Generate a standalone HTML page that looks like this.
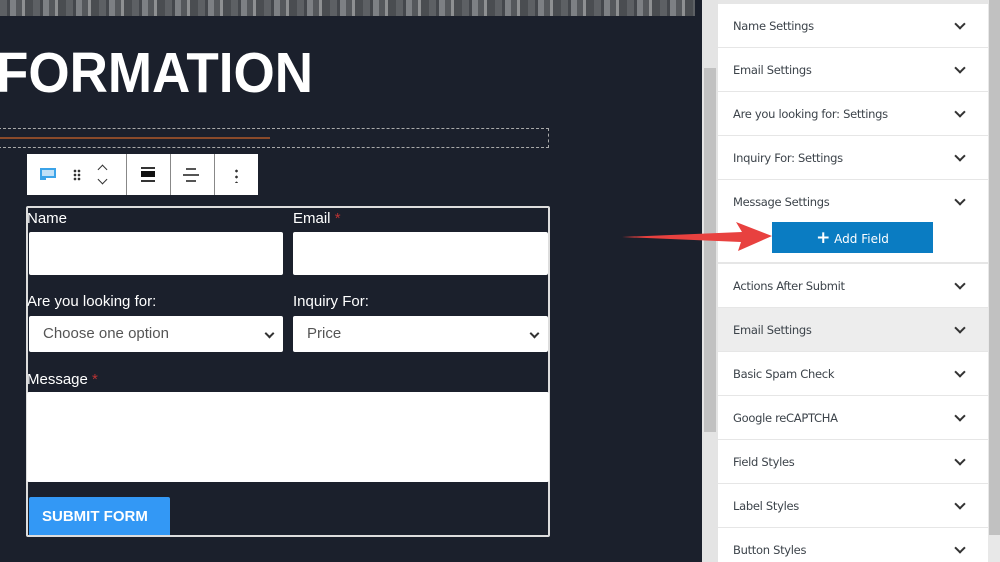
<!DOCTYPE html>
<html><head><style>
*{box-sizing:border-box;margin:0;padding:0}
html,body{width:1000px;height:562px;overflow:hidden}
body{background:#1b202c;position:relative;font-family:"Liberation Sans",sans-serif}
.abs{position:absolute}
.photo{left:0;top:0;width:695px;height:16px;background:repeating-linear-gradient(90deg,#5d6064 0 7px,#44474c 7px 10px,#7d8084 10px 16px,#55585c 16px 22px,#8e9092 22px 25px,#4a4d51 25px 33px)}
h1{position:absolute;left:-4px;top:40px;color:#fff;font-size:57px;font-weight:bold;transform:scaleX(0.93);transform-origin:0 0}
.lbl{position:absolute;color:#fff;font-size:15px}
.lbl b{color:#b33;font-weight:normal}
.inp{position:absolute;background:#fff;border-radius:2px}
.sel{position:absolute;background:#fff;color:#555;font-size:15px;padding:9px 0 0 14px;border-radius:2px}
.sel:after{content:"";position:absolute;right:10px;top:14px;width:5px;height:5px;border-right:2px solid #333;border-bottom:2px solid #333;transform:rotate(45deg)}
.row{position:absolute;left:718px;width:270px;height:43px;background:#fff;color:#3c434a;font-size:11.5px;padding-left:15px;line-height:45px;font-family:"DejaVu Sans","Liberation Sans",sans-serif;letter-spacing:-0.3px;overflow:hidden}
.row:after{content:"";position:absolute;right:24px;top:16px;width:6px;height:6px;border-right:2px solid #333;border-bottom:2px solid #333;transform:rotate(45deg)}
</style></head><body>
<div class="abs photo"></div>
<div class="abs" style="left:702px;top:0;width:16px;height:562px;background:#e4e4e4"></div>
<div class="abs" style="left:704px;top:68px;width:12px;height:364px;background:#c1c1c1"></div>
<div class="abs" style="left:718px;top:0;width:270px;height:562px;background:#e6e6e6"></div>
<div class="abs" style="left:988px;top:0;width:12px;height:562px;background:#e8e8e8"></div>
<div class="abs" style="left:989px;top:0;width:11px;height:535px;background:#c1c1c1"></div>
<h1>FORMATION</h1>
<div class="abs" style="left:-2px;top:128px;width:551px;height:20px;border:1px dashed #aaa"></div>
<div class="abs" style="left:0;top:137px;width:270px;height:2px;background:#8a4a2a"></div>
<div class="abs" style="left:27px;top:154px;width:231px;height:41px;background:#fff"></div>
<div class="abs" style="left:126px;top:154px;width:1px;height:41px;background:#888"></div>
<div class="abs" style="left:170px;top:154px;width:1px;height:41px;background:#888"></div>
<div class="abs" style="left:214px;top:154px;width:1px;height:41px;background:#888"></div>
<div class="abs" style="left:40px;top:168px;width:16px;height:10px;border:2px solid #3ba3e8;background:#bfe0f7"></div>
<div class="abs" style="left:40px;top:177px;width:6px;height:3px;background:#3ba3e8"></div>
<div class="abs" style="left:73px;top:169px;width:8px;height:12px;background:radial-gradient(circle,#333 1.2px,transparent 1.5px) 0 0/4px 4px"></div>
<div class="abs" style="left:99px;top:166px;width:7px;height:7px;border-left:1.5px solid #333;border-top:1.5px solid #333;transform:rotate(45deg)"></div>
<div class="abs" style="left:99px;top:176px;width:7px;height:7px;border-right:1.5px solid #333;border-bottom:1.5px solid #333;transform:rotate(45deg)"></div>
<div class="abs" style="left:141px;top:167px;width:14px;height:2px;background:#333"></div>
<div class="abs" style="left:141px;top:171px;width:14px;height:6px;background:#111"></div>
<div class="abs" style="left:141px;top:180px;width:14px;height:2px;background:#333"></div>
<div class="abs" style="left:186px;top:168px;width:10px;height:2px;background:#555"></div>
<div class="abs" style="left:183px;top:174px;width:16px;height:2px;background:#555"></div>
<div class="abs" style="left:186px;top:180px;width:10px;height:2px;background:#555"></div>
<div class="abs" style="left:235px;top:168px;width:3px;height:15px;background:radial-gradient(circle,#333 1.2px,transparent 1.5px) 0 0/3px 6px"></div>
<div class="abs" style="left:26px;top:206px;width:524px;height:331px;border:2px solid #ddd;border-radius:2px"></div>
<div class="lbl" style="left:27px;top:210px">Name</div>
<div class="lbl" style="left:293px;top:210px">Email <b>*</b></div>
<div class="inp" style="left:29px;top:232px;width:254px;height:43px"></div>
<div class="inp" style="left:293px;top:232px;width:255px;height:43px"></div>
<div class="lbl" style="left:27px;top:293px">Are you looking for:</div>
<div class="lbl" style="left:293px;top:293px">Inquiry For:</div>
<div class="sel" style="left:29px;top:316px;width:254px;height:36px">Choose one option</div>
<div class="sel" style="left:293px;top:316px;width:255px;height:36px">Price</div>
<div class="lbl" style="left:27px;top:371px">Message <b>*</b></div>
<div class="inp" style="left:27px;top:392px;width:522px;height:90px"></div>
<div class="abs" style="left:29px;top:497px;width:141px;height:38px;background:#3398f5;color:#fff;font-weight:bold;font-size:15px;padding:11px 0 0 13px;border-radius:2px 2px 0 0">SUBMIT FORM</div>
<div class="row" style="top:4px">Name Settings</div>
<div class="row" style="top:48px">Email Settings</div>
<div class="row" style="top:92px">Are you looking for: Settings</div>
<div class="row" style="top:136px">Inquiry For: Settings</div>
<div class="row" style="top:180px;height:82px">Message Settings</div>
<div class="abs" style="left:772px;top:222px;width:161px;height:31px;background:#0a7cc2;color:#fff;font-size:12px;font-family:'DejaVu Sans',sans-serif;text-align:center;line-height:32px"><span style="font-size:17px;font-weight:bold">+</span> Add Field</div>
<div class="row" style="top:264px">Actions After Submit</div>
<div class="row" style="top:308px;background:#ededed">Email Settings</div>
<div class="row" style="top:352px">Basic Spam Check</div>
<div class="row" style="top:396px">Google reCAPTCHA</div>
<div class="row" style="top:440px">Field Styles</div>
<div class="row" style="top:484px">Label Styles</div>
<div class="row" style="top:528px;height:34px">Button Styles</div>
<svg class="abs" style="left:618px;top:220px" width="156" height="34"><polygon points="4,17 124,12 118,2 154,16 120,31 123,22" fill="#e8413f"/></svg>
</body></html>
